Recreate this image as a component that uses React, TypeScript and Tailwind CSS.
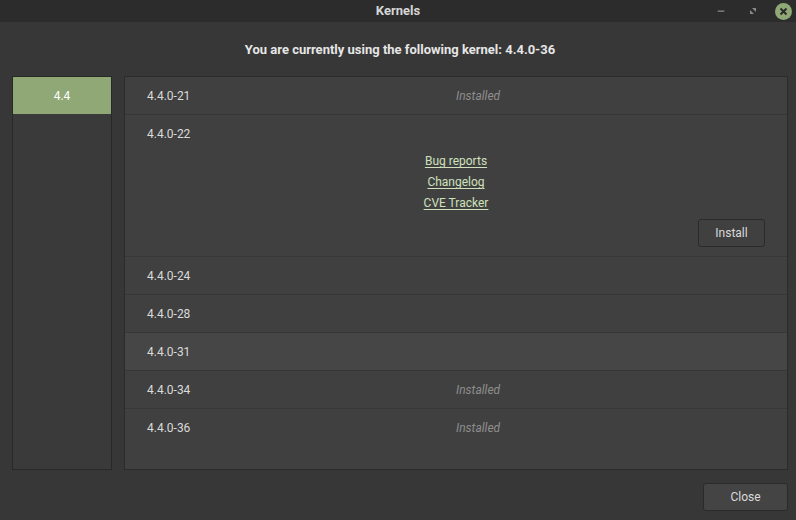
import { Minus } from "lucide-react";

type Kernel = { name: string; installed?: boolean; hover?: boolean; open?: boolean };

const kernels: Kernel[] = [
  { name: "4.4.0-21", installed: true },
  { name: "4.4.0-22", open: true },
  { name: "4.4.0-24" },
  { name: "4.4.0-28" },
  { name: "4.4.0-31", hover: true },
  { name: "4.4.0-34", installed: true },
  { name: "4.4.0-36", installed: true },
];

export default function App() {
  return (
    <div
      className="flex h-[520px] w-[796px] flex-col bg-[#373737] text-[12px] text-[#dadada]"
      style={{ fontFamily: "Roboto, 'Noto Sans', sans-serif" }}
    >
      {/* title bar */}
      <div className="relative flex h-[22px] shrink-0 items-center justify-center bg-[#2c2c2c]">
        <span className="text-[13px] font-bold text-[#d6d6d6]">Kernels</span>
        <div className="absolute right-[4px] top-0 flex h-[22px] items-center gap-[14px]">
          <Minus size={10} strokeWidth={3} className="text-[#8a8a8a]" />
          <svg width="16" height="16" viewBox="0 0 16 16" className="ml-[5px]">
            <path d="M7 5h4v4z" fill="#8a8a8a" />
            <path d="M5 7v4h4z" fill="#8a8a8a" />
          </svg>
          <div className="flex h-[17px] w-[17px] items-center justify-center rounded-full bg-[#8fa876]">
            <svg width="9" height="9" viewBox="0 0 9 9">
              <path d="M1.5 1.5l6 6M7.5 1.5l-6 6" stroke="#2b2b2b" strokeWidth="2" />
            </svg>
          </div>
        </div>
      </div>

      <div className="flex h-[54px] shrink-0 items-center justify-center pl-[4px] pt-[1px]">
        <span className="text-[13px] font-bold text-[#e6e6e6]">
          You are currently using the following kernel: 4.4.0-36
        </span>
      </div>

      <div className="flex h-[394px] gap-[12px] pl-[12px] pr-[8px]">
        {/* series list */}
        <div className="w-[100px] border border-[#282828] bg-[#3a3a3a]">
          <div className="flex h-[37px] items-center justify-center bg-[#8fa876] text-white">4.4</div>
        </div>

        {/* kernel list */}
        <div className="flex-1 border border-[#2b2b2b] bg-[#404040]">
          {kernels.map((k, i) =>
            k.open ? (
              <div key={k.name} className="border-b border-[#373737]">
                <div className="grid h-[35px] grid-cols-2 items-center">
                  <span className="pl-[22px] pt-[2px]">{k.name}</span>
                </div>
                <div className="flex flex-col items-center pt-[1px] text-[#cfe0bd]">
                  <span className="h-[21px] leading-[21px] underline underline-offset-2">Bug reports</span>
                  <span className="h-[21px] leading-[21px] underline underline-offset-2">Changelog</span>
                  <span className="h-[21px] leading-[21px] underline underline-offset-2">CVE Tracker</span>
                </div>
                <div className="flex justify-end pb-[9px] pr-[22px] pt-[5px]">
                  <button className="h-[28px] w-[67px] rounded-[3px] border border-[#2a2a2a] bg-[#404040] text-[#dadada]">
                    Install
                  </button>
                </div>
              </div>
            ) : (
              <div
                key={k.name}
                className={`grid h-[38px] grid-cols-2 items-center ${
                  i < kernels.length - 1 ? "border-b border-[#373737]" : ""
                } ${k.hover ? "bg-[#464646]" : ""}`}
              >
                <span className="pl-[22px]">{k.name}</span>
                {k.installed ? <span className="italic text-[#8e8e8e]">Installed</span> : <span />}
              </div>
            ),
          )}
        </div>
      </div>

      <div className="flex flex-1 items-start justify-end pr-[8px] pt-[13px]">
        <button className="h-[28px] w-[85px] rounded-[3px] border border-[#2a2a2a] bg-[#444444] text-[#dadada]">
          Close
        </button>
      </div>
    </div>
  );
}
